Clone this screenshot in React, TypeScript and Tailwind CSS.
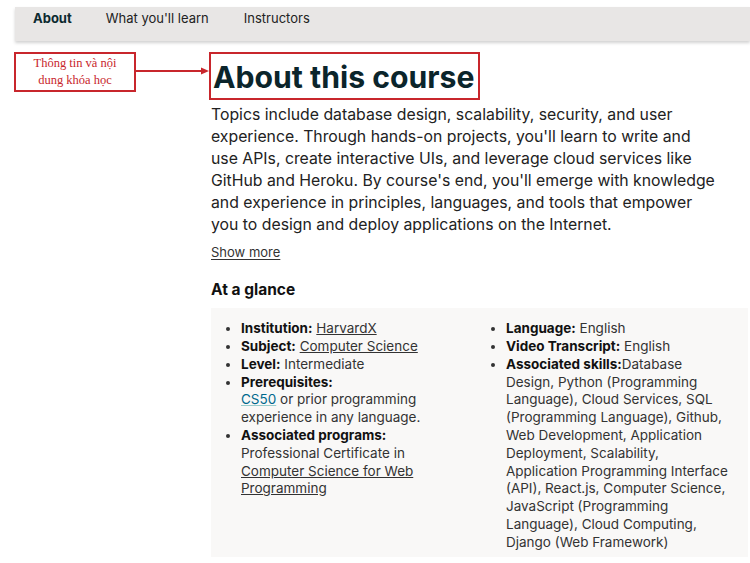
import React from "react";

export default function App() {
  return (
    <div className="relative w-[750px] h-[563px] bg-white overflow-hidden font-['Inter',sans-serif] text-[#2a2a2a]">
      {/* Nav */}
      <div className="ml-[15px] mt-[7px] h-[34px] bg-[#e8e6e5] shadow-[0_2px_3px_rgba(0,0,0,0.18)] flex items-start pt-[2px] text-[13px] text-[#222]">
        <div className="ml-[18px] font-bold text-[#0d2a30]">About</div>
        <div className="ml-[34px]">What you'll learn</div>
        <div className="ml-[35px]">Instructors</div>
      </div>

      {/* Content */}
      <div className="pl-[211px] pr-[5px]">
        <div className="-ml-[2px] mt-[11px] w-[271px] h-[48px] border-2 border-[#c8262c] flex items-center pl-[2px]">
          <h1 className="whitespace-nowrap text-[30.2px] font-bold text-[#0b252b] leading-none mt-[3px]">About this course</h1>
        </div>
        <p className="mt-[4px] text-[15.8px] leading-[21.9px] text-[#222] w-[535px]">
          Topics include database design, scalability, security, and user<br />
          experience. Through hands-on projects, you'll learn to write and<br />
          use APIs, create interactive UIs, and leverage cloud services like<br />
          GitHub and Heroku. By course's end, you'll emerge with knowledge<br />
          and experience in principles, languages, and tools that empower<br />
          you to design and deploy applications on the Internet.
        </p>
        <div className="mt-[8px] text-[13px] underline text-[#333] underline-offset-2">Show more</div>
        <h2 className="mt-[15px] text-[15.5px] font-bold text-[#111]">At a glance</h2>
        <div className="mt-[7px] w-[537px] h-[249px] bg-[#f9f8f7] pt-[12px] pl-[20px] grid grid-cols-[265px_245px] text-[13.5px] leading-[17.8px] text-[#333]">
          <ul className="list-disc w-[210px] [&>li]:ml-[10px]">
            <li><b className="text-[#111]">Institution:</b> <span className="underline">HarvardX</span></li>
            <li><b className="text-[#111]">Subject:</b> <span className="underline">Computer Science</span></li>
            <li><b className="text-[#111]">Level:</b> Intermediate</li>
            <li><b className="text-[#111]">Prerequisites:</b><br /><span className="text-[#00688d] underline decoration-[#9cc]">CS50</span> or prior programming experience in any language.</li>
            <li><b className="text-[#111]">Associated programs:</b><br />Professional Certificate in <span className="underline">Computer Science for Web Programming</span></li>
          </ul>
          <ul className="list-disc w-[245px] whitespace-nowrap [&>li]:ml-[10px]">
            <li><b className="text-[#111]">Language:</b> English</li>
            <li><b className="text-[#111]">Video Transcript:</b> English</li>
            <li>
              <b className="text-[#111]">Associated skills:</b>Database<br />
              Design, Python (Programming<br />
              Language), Cloud Services, SQL<br />
              (Programming Language), Github,<br />
              Web Development, Application<br />
              Deployment, Scalability,<br />
              Application Programming Interface<br />
              (API), React.js, Computer Science,<br />
              JavaScript (Programming<br />
              Language), Cloud Computing,<br />
              Django (Web Framework)
            </li>
          </ul>
        </div>
      </div>

      {/* Annotation */}
      <div className="absolute left-[14px] top-[52px] w-[122px] h-[40px] border-2 border-[#c8262c] flex items-center justify-center text-center font-['Liberation_Serif',serif] text-[12.5px] leading-[17px] text-[#c8262c] bg-white">
        Thông tin và nội<br />dung khóa học
      </div>
      <div className="absolute left-[136px] top-[70px] w-[66px] h-[1.5px] bg-[#c8262c]" />
      <svg className="absolute left-[201px] top-[67px]" width="8" height="8" viewBox="0 0 8 8">
        <polygon points="0,0.5 8,4 0,7.5" fill="#c8262c" />
      </svg>
    </div>
  );
}
